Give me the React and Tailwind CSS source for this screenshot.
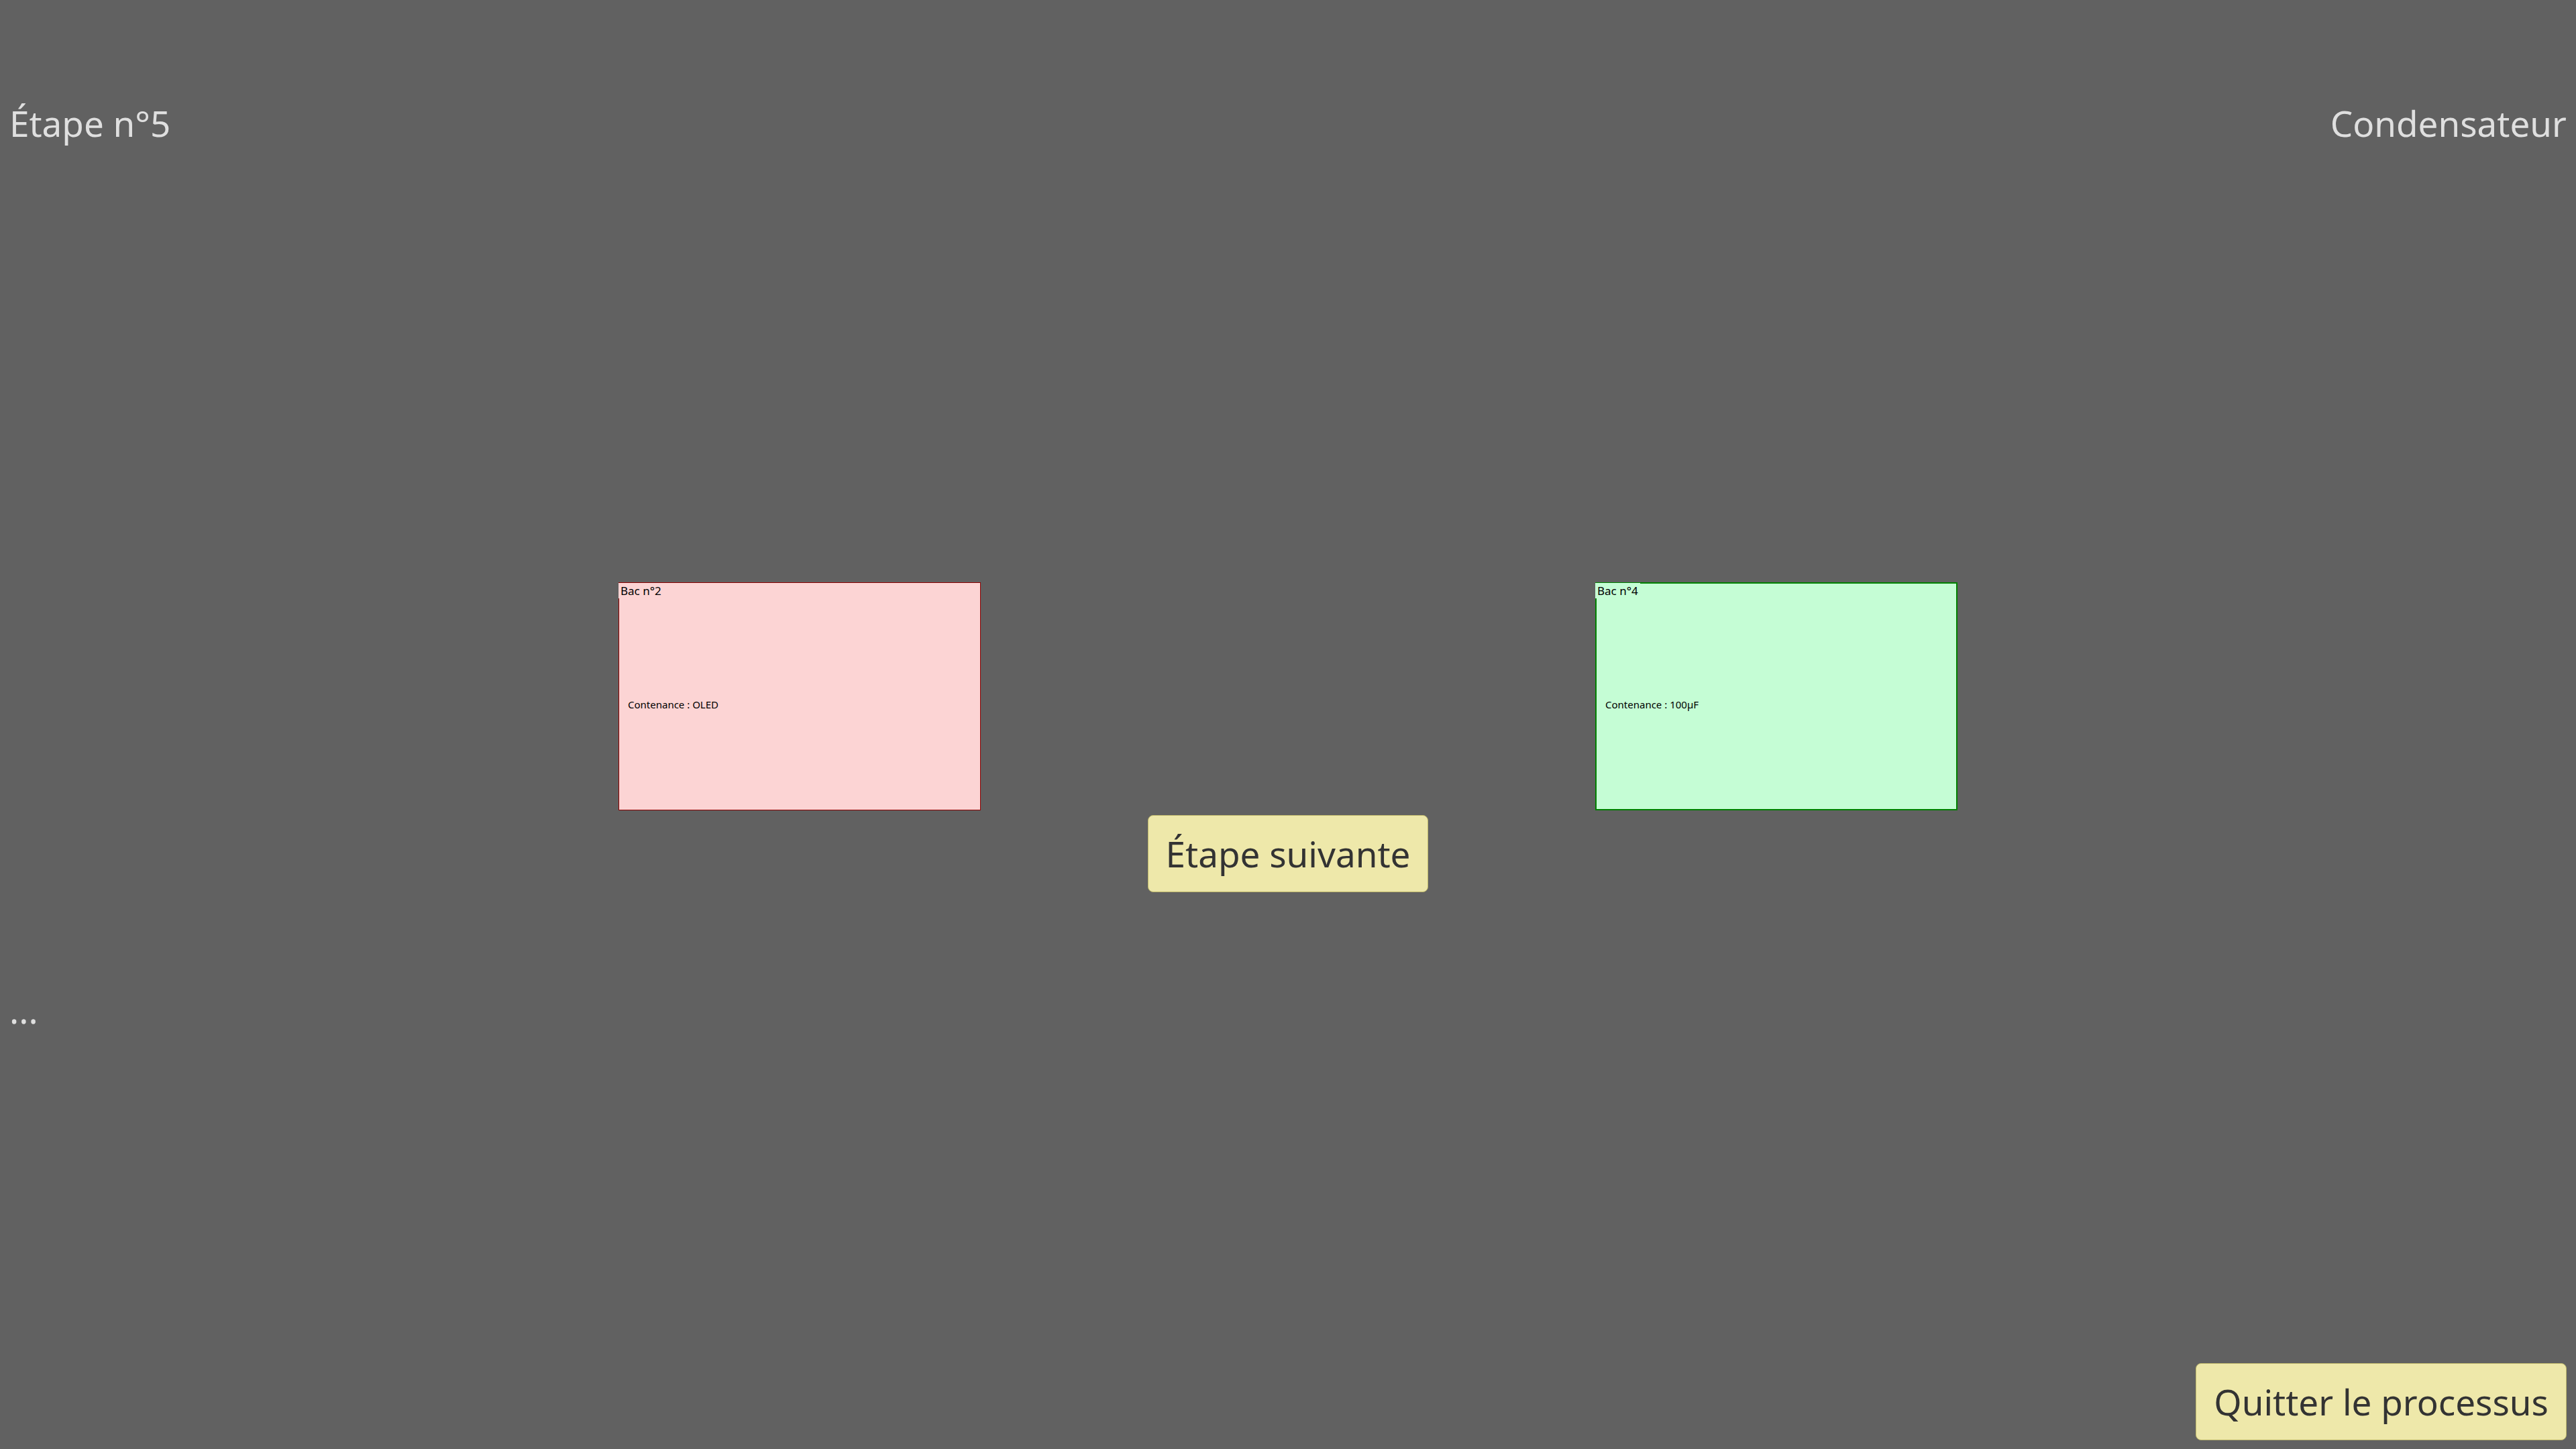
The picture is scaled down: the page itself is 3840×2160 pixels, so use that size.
const bins = [
  {
    id: 2,
    content: 'OLED',
    card: 'border border-[#8b0000] bg-[#fcd4d4]',
    label: '-left-px top-0 bg-[#fcd4d4]',
  },
  {
    id: 4,
    content: '100µF',
    card: 'border-2 border-[#008000] bg-[#c5fdd5]',
    label: '-left-0.5 -top-px bg-[#c5fdd5]',
  },
]

function Bin({ id, content, card, label }) {
  return (
    <article className={`relative flex h-[340px] w-[540px] items-center text-black ${card}`}>
      <h2 className={`absolute px-[3px] text-[17px] leading-[23px] ${label}`}>Bac n°{id}</h2>
      <p className="px-[13px] pt-6 text-[15px] leading-5">Contenance : {content}</p>
    </article>
  )
}

function ActionButton({ children }) {
  return (
    <button
      type="button"
      className="rounded-lg border border-[#bdb76b] bg-[#eee8aa] px-[26px] py-5 text-[53px] leading-[73px] text-[#333333]"
    >
      {children}
    </button>
  )
}

export default function App() {
  return (
    <div className="grid min-h-screen grid-rows-[367fr_963fr_350fr_480fr] bg-[#616161] font-['Noto_Sans',sans-serif] text-[53px] leading-[73px] text-[#dfdfdf]">
      <header className="flex items-center justify-between px-3.5">
        <h1>Étape n°5</h1>
        <p>Condensateur</p>
      </header>
      <main className="flex flex-col items-center justify-end gap-[7px]">
        <div className="flex w-full justify-evenly px-1.5">
          {bins.map((bin) => (
            <Bin key={bin.id} {...bin} />
          ))}
        </div>
        <ActionButton>Étape suivante</ActionButton>
      </main>
      <p className="flex items-center px-3.5">...</p>
      <footer className="flex items-end justify-end px-3.5 pb-[13px]">
        <ActionButton>Quitter le processus</ActionButton>
      </footer>
    </div>
  )
}
